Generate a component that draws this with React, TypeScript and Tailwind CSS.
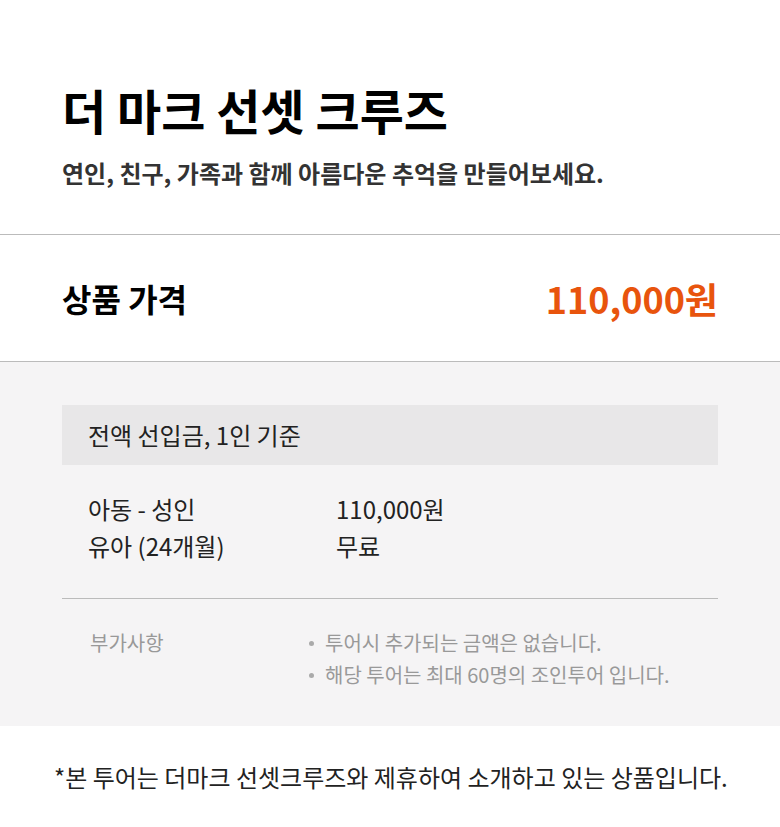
export default function App() {
  return (
    <div className="w-[780px] bg-white text-black" style={{ fontFamily: '"Noto Sans CJK KR", "Noto Sans", sans-serif' }}>
      {/* 상단 타이틀 */}
      <div className="px-[62px] pt-[79px] pb-[45px]">
        <h1 className="text-[48px] font-bold leading-[60px]">더 마크 선셋 크루즈</h1>
        <p className="mt-[18px] text-[24px] font-bold leading-[32px] text-[#333]">
          연인, 친구, 가족과 함께 아름다운 추억을 만들어보세요.
        </p>
      </div>

      {/* 상품 가격 */}
      <div className="border-t border-b border-[#bbbbbb] h-[128px] px-[62px] flex items-center justify-between">
        <span className="text-[32px] font-bold">상품 가격</span>
        <span className="text-[36px] font-bold text-[#e8540d]">110,000원</span>
      </div>

      {/* 상세 */}
      <div className="bg-[#f5f4f5] px-[62px] pt-[43px] pb-[35px]">
        <div className="bg-[#e8e7e8] h-[60px] px-[26px] flex items-center text-[24px] text-[#222]">
          전액 선입금, 1인 기준
        </div>
        <div className="px-[26px] pt-[25px] pb-[34px] text-[24px] leading-[37px] text-[#222]">
          <div className="flex">
            <span className="w-[248px]">아동 - 성인</span>
            <span>110,000원</span>
          </div>
          <div className="flex">
            <span className="w-[248px]">유아 (24개월)</span>
            <span>무료</span>
          </div>
        </div>
        <div className="border-t border-[#bbbbbb] pt-[28px] px-[28px] flex text-[20px] leading-[32px] text-[#999]">
          <span className="w-[219px]">부가사항</span>
          <ul>
            <li className="flex items-center">
              <span className="w-[5px] h-[5px] rounded-full bg-[#aaa] mr-[11px]"></span>
              투어시 추가되는 금액은 없습니다.
            </li>
            <li className="flex items-center">
              <span className="w-[5px] h-[5px] rounded-full bg-[#aaa] mr-[11px]"></span>
              해당 투어는 최대 60명의 조인투어 입니다.
            </li>
          </ul>
        </div>
      </div>

      {/* 하단 안내 */}
      <div className="h-[101px] flex items-center pl-[54px] text-[24px] text-[#222] whitespace-nowrap">
        *본 투어는 더마크 선셋크루즈와 제휴하여 소개하고 있는 상품입니다.
      </div>
    </div>
  );
}
